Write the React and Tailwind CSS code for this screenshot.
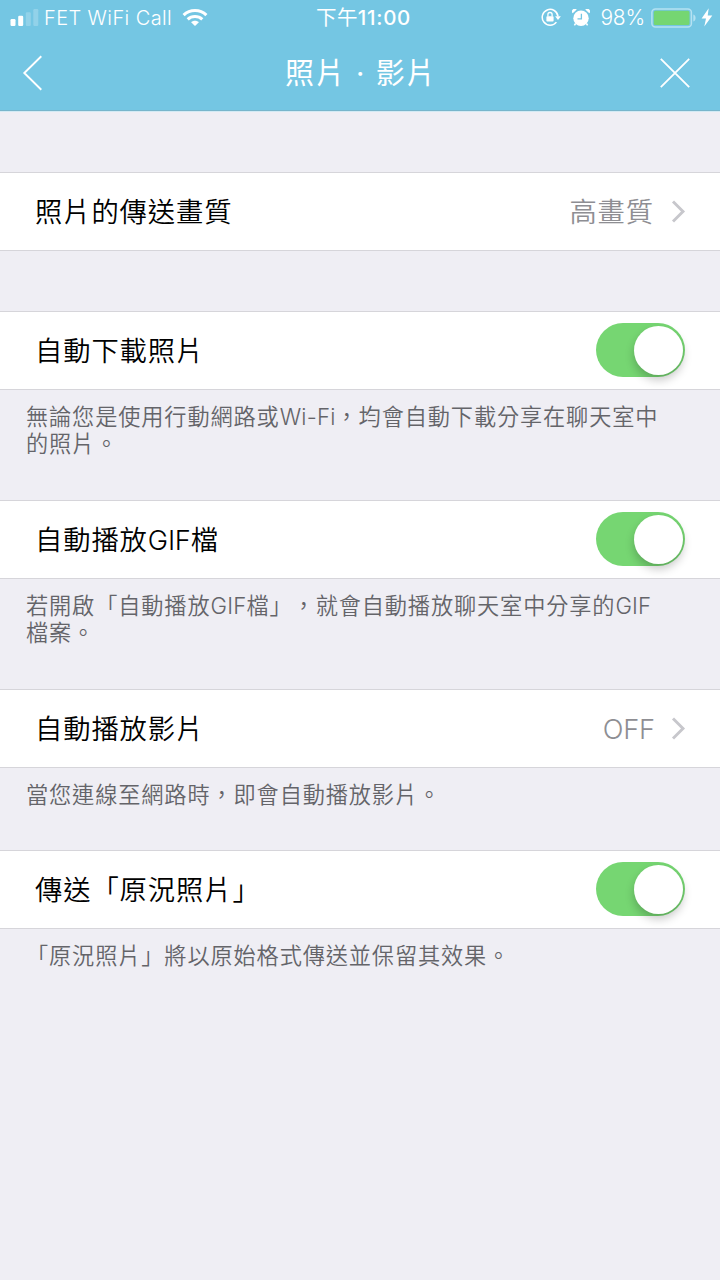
import React from "react";

const CJK = "font-['Inter','Noto_Sans_CJK_TC',sans-serif]";

function SignalIcon() {
  return (
    <svg width="29" height="18" viewBox="0 0 29 18" fill="#fff">
      <rect x="0.5" y="10" width="5" height="7" rx="1.2" />
      <rect x="8.2" y="6.7" width="5" height="10.3" rx="1.2" />
      <rect x="15.8" y="3.2" width="5" height="13.8" rx="1.2" opacity="0.22" />
      <rect x="23.3" y="0" width="5" height="17" rx="1.2" opacity="0.22" />
    </svg>
  );
}

function WifiIcon() {
  return (
    <svg width="26" height="19" viewBox="0 0 26 19" fill="none" stroke="#fff" strokeWidth="3.1">
      <path d="M1.6 7.1C8 0.9 18 0.9 24.4 7.1" />
      <path d="M5.7 11.4C9.8 7.6 16.2 7.6 20.3 11.4" />
      <path d="M13 18L9.1 14.2C11.3 12.2 14.7 12.2 16.9 14.2Z" fill="#fff" stroke="none" />
    </svg>
  );
}

function RotationLockIcon() {
  return (
    <svg width="20" height="19" viewBox="0 0 20 19" fill="none" stroke="#fff">
      <path d="M15.4 14.1A7.9 7.9 0 1 1 17 8.4" strokeWidth="1.5" />
      <path d="M14.1 8.2H19.9L17 12Z" fill="#fff" stroke="none" />
      <rect x="5.4" y="8.2" width="7.2" height="5.3" rx="0.8" fill="#fff" stroke="none" />
      <path d="M6.9 8.4V6.6A2.1 2.1 0 0 1 11.1 6.6V8.4" strokeWidth="1.3" />
    </svg>
  );
}

function AlarmIcon() {
  return (
    <svg width="18" height="18" viewBox="0 0 18 18">
      <circle cx="9" cy="9.3" r="7.7" fill="#fff" />
      <path d="M0.7 4.3A2.7 2.7 0 0 1 4.7 0.5Z" fill="#fff" />
      <path d="M17.3 4.3A2.7 2.7 0 0 0 13.3 0.5Z" fill="#fff" />
      <path d="M3.6 14.5L2.4 16.4M14.4 14.5L15.6 16.4" stroke="#fff" strokeWidth="1.5" />
      <path d="M9.4 4.8V9.8H5.5" fill="none" stroke="#74c6e3" strokeWidth="1.3" />
    </svg>
  );
}

function BatteryIcon() {
  return (
    <svg width="46" height="20" viewBox="0 0 46 20">
      <rect x="0.9" y="0.9" width="39.5" height="18" rx="3.5" fill="none" stroke="#b5e2f2" strokeWidth="1.5" />
      <rect x="2.8" y="2.8" width="35.7" height="14.2" rx="1.6" fill="#75d672" />
      <path d="M42.3 6.4C45.3 7.3 45.3 12.5 42.3 13.4Z" fill="#b5e2f2" />
    </svg>
  );
}

function BoltIcon() {
  return (
    <svg width="12" height="19" viewBox="0 0 12 19" fill="#fff">
      <path d="M7.7 0.3L0.6 10.4H5L3.3 18.4L11.3 7.5H6.7Z" />
    </svg>
  );
}

function StatusBar() {
  return (
    <div className="grid h-9 grid-cols-[1fr_auto_1fr] items-center text-[20px] leading-9 text-white">
      <div className="flex items-center pl-[9.5px]">
        <SignalIcon />
        <span className="ml-[5.5px] font-[350] tracking-[0.4px]">FET WiFi Call</span>
        <span className="ml-[10px] -mt-0.5">
          <WifiIcon />
        </span>
      </div>
      <div className="pl-[7px]">
        <span className="text-[20.5px] tracking-[0.4px]">下午</span>
        <span className="text-[20.5px] font-medium tracking-[0.7px]">11:00</span>
      </div>
      <div className="flex items-center justify-end pr-[7.5px]">
        <span className="-mt-px">
          <RotationLockIcon />
        </span>
        <span className="ml-[11px]">
          <AlarmIcon />
        </span>
        <span className="ml-[10px] text-[21px] font-[350] tracking-[-0.2px]">98%</span>
        <span className="ml-[5.5px] -mt-px">
          <BatteryIcon />
        </span>
        <span className="ml-[4px] -mt-px">
          <BoltIcon />
        </span>
      </div>
    </div>
  );
}

function NavBar() {
  return (
    <div className="flex h-[74px] items-center justify-between pr-[29px] pl-[22px] text-white">
      <svg width="21" height="36" viewBox="0 0 21 36" fill="none" stroke="#fff" strokeWidth="1.9">
        <path d="M19.3 1.3L2.3 18L19.3 34.7" />
      </svg>
      <h1 className="pt-[2px] pl-[20px] text-[29px] leading-[40px] font-normal tracking-[1.6px] whitespace-pre">照片 · 影片</h1>
      <svg width="32" height="32" viewBox="0 0 32 32" fill="none" stroke="#fff" strokeWidth="1.8">
        <path d="M1.8 1.8L30.2 30.2M30.2 1.8L1.8 30.2" />
      </svg>
    </div>
  );
}

function Chevron() {
  return (
    <svg width="17" height="24" viewBox="0 0 17 24" fill="none" stroke="#c7c7cc" strokeWidth="2.9">
      <path d="M3 1.5L13 11.5L3 21.5" />
    </svg>
  );
}

function Toggle() {
  return (
    <button
      role="switch"
      aria-checked="true"
      className="-mt-px flex h-[54px] w-[89px] items-center justify-end rounded-full bg-[#76d672] pr-[2px]"
    >
      <span className="h-[49px] w-[49px] rounded-full bg-white shadow-[0_5px_10px_rgba(0,0,0,0.22)]" />
    </button>
  );
}

function Latin({ children }) {
  return <span className="tracking-[-0.2px]">{children}</span>;
}

function NoteLatin({ children }) {
  return <span className="tracking-[0.2px]">{children}</span>;
}

function Row({ label, value }) {
  return (
    <div className="flex h-[79px] items-center justify-between border-y border-[#d6d5da] bg-white pr-[35px] pl-[35px]">
      <span className="pt-[3px] text-[27.3px] leading-[40px] font-[350] tracking-[0.9px] text-black">{label}</span>
      {value ? (
        <span className="-mr-0.5 flex items-center gap-[15px] text-[27.3px] leading-[40px] font-[350] text-[#8e8e93]">
          <span className="pt-[2px]">{value}</span>
          <Chevron />
        </span>
      ) : (
        <Toggle />
      )}
    </div>
  );
}

function Note({ children, className }) {
  return (
    <p
      className={
        "pt-[13px] pl-[26px] text-[22.2px] leading-[27px] font-[350] tracking-[0.87px] whitespace-nowrap text-[#646469] " +
        className
      }
    >
      {children}
    </p>
  );
}

export default function App() {
  return (
    <div
      lang="zh-Hant"
      className={"flex h-[1280px] w-[720px] flex-col overflow-hidden bg-[#efeef4] [text-spacing-trim:space-all] " + CJK}
    >
      <header className="h-[111px] border-b border-[#78b5cb] bg-[#74c6e3]">
        <StatusBar />
        <NavBar />
      </header>
      <main className="flex flex-col border-t border-[#d3eaf4] pt-[60px]">
        <Row label="照片的傳送畫質" value={<span className="pr-px tracking-[0.9px]">高畫質</span>} />
        <div className="h-[60px]" />
        <Row label="自動下載照片" />
        <Note className="h-[110px]">
          無論您是使用行動網路或<NoteLatin>Wi-Fi</NoteLatin>，均會自動下載分享在聊天室中
          <br />
          的照片。
        </Note>
        <Row
          label={
            <>
              自動播放<Latin>GIF</Latin>檔
            </>
          }
        />
        <Note className="h-[110px]">
          若開啟「自動播放<NoteLatin>GIF</NoteLatin>檔」，就會自動播放聊天室中分享的<NoteLatin>GIF</NoteLatin>
          <br />
          檔案。
        </Note>
        <Row label="自動播放影片" value={<span className="tracking-[-0.2px]">OFF</span>} />
        <Note className="h-[82px]">當您連線至網路時，即會自動播放影片。</Note>
        <Row label="傳送「原況照片」" />
        <Note className="">「原況照片」將以原始格式傳送並保留其效果。</Note>
      </main>
    </div>
  );
}
